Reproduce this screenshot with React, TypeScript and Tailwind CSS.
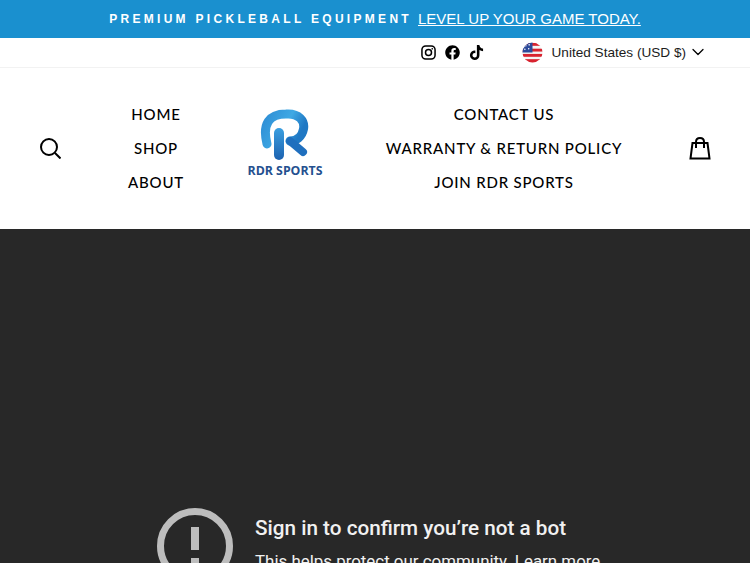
import { FaFacebook, FaTiktok } from "react-icons/fa";
import { ChevronDown } from "lucide-react";

const leftLinks = ["HOME", "SHOP", "ABOUT"];
const rightLinks = ["CONTACT US", "WARRANTY & RETURN POLICY", "JOIN RDR SPORTS"];

function NavColumn({ links, className }: { links: string[]; className: string }) {
  return (
    <ul className={`flex flex-col items-center ${className}`}>
      {links.map((l) => (
        <li key={l} className="flex h-[34px] items-center whitespace-nowrap font-['Lato',sans-serif] text-[15px] font-medium tracking-[0.8px] text-black">
          {l}
        </li>
      ))}
    </ul>
  );
}

function UsFlag() {
  return (
    <svg viewBox="0 0 22 22" className="h-[21px] w-[21px] shrink-0">
      <defs>
        <clipPath id="flag-clip">
          <circle cx="11" cy="11" r="10.5" />
        </clipPath>
      </defs>
      <g clipPath="url(#flag-clip)">
        <rect width="22" height="22" fill="#f4f4f4" />
        <rect y="1" width="22" height="3" fill="#d8232f" />
        <rect y="7" width="22" height="3" fill="#d8232f" />
        <rect y="12.5" width="22" height="3" fill="#d8232f" />
        <rect y="18" width="22" height="4" fill="#d8232f" />
        <rect width="11" height="11" fill="#2c4a9a" />
        <circle cx="4" cy="4" r="0.8" fill="#fff" />
        <circle cx="7.5" cy="3" r="0.8" fill="#fff" />
        <circle cx="3" cy="7.5" r="0.8" fill="#fff" />
        <circle cx="7" cy="7" r="0.8" fill="#fff" />
      </g>
    </svg>
  );
}

function InstagramIcon() {
  return (
    <svg viewBox="0 0 16 16" className="h-[15px] w-[15px]" fill="none" stroke="black">
      <rect x="1" y="1" width="14" height="14" rx="4" strokeWidth="1.6" />
      <circle cx="8" cy="8" r="3.2" strokeWidth="1.6" />
      <circle cx="12" cy="4" r="0.9" fill="black" stroke="none" />
    </svg>
  );
}

function LogoMark() {
  return (
    <svg viewBox="260 106 52 56" className="h-[56px] w-[52px] shrink-0" fill="none" strokeLinecap="round">
      <defs>
        <linearGradient id="arc" x1="0" y1="0" x2="1" y2="0.4">
          <stop offset="0" stopColor="#2f8fd6" />
          <stop offset="0.6" stopColor="#3fa9e4" />
          <stop offset="1" stopColor="#1f78c4" />
        </linearGradient>
        <linearGradient id="stem" gradientUnits="userSpaceOnUse" x1="280" y1="126" x2="280" y2="158">
          <stop offset="0" stopColor="#3a9fe0" />
          <stop offset="1" stopColor="#1c62b0" />
        </linearGradient>
      </defs>
      <path d="M268 142C263 122 270 112 287 112C300 111 306 119 304.5 127C303 135 297 139 291 139" stroke="url(#arc)" strokeWidth="9" />
      <path d="M291 139L304 150" stroke="#1f6fbe" strokeWidth="8" />
      <path d="M280 131L280 153" stroke="url(#stem)" strokeWidth="10" />
    </svg>
  );
}

export default function App() {
  return (
    <div className="flex h-[563px] flex-col overflow-hidden bg-white font-['Liberation_Sans',Arial,sans-serif]">
      <div className="flex h-[38px] shrink-0 items-center justify-center gap-[6px] bg-[#1a90cf] text-white">
        <span className="text-[12px] font-bold tracking-[3.3px]">PREMIUM PICKLEBALL EQUIPMENT</span>
        <a className="text-[15px] underline">LEVEL UP YOUR GAME TODAY.</a>
      </div>

      <div className="flex h-[30px] shrink-0 items-center justify-end border-b border-[#f2f2f2] pr-[42px]">
        <div className="mb-[1px] flex items-center gap-[9px]">
          <InstagramIcon />
          <FaFacebook className="h-[15px] w-[15px] text-black" />
          <FaTiktok className="h-[15px] w-[15px] text-black" />
        </div>
        <div className="ml-[38px] flex items-center">
          <UsFlag />
          <span className="mt-[1px] ml-[9px] text-[13.6px] text-[#1c1c1c]">United States (USD $)</span>
          <ChevronDown className="ml-[2px] h-[20px] w-[20px] text-black" strokeWidth={1.5} />
        </div>
      </div>

      <header className="flex h-[161px] shrink-0 items-center pl-[40px]">
        <svg viewBox="0 0 21 21" className="h-[21px] w-[21px] shrink-0" fill="none" stroke="black" strokeWidth="2">
          <circle cx="9" cy="9" r="8" />
          <path d="M15 15L20.5 20.5" />
        </svg>
        <NavColumn links={leftLinks} className="ml-[5px] w-[180px]" />
        <div className="mb-[12px] flex w-[78px] flex-col items-center">
          <LogoMark />
          <span className="whitespace-nowrap font-['Open_Sans',sans-serif] text-[12.3px] leading-[14px] font-bold text-[#24508f]">RDR SPORTS</span>
        </div>
        <NavColumn links={rightLinks} className="w-[360px]" />
        <svg viewBox="0 0 22 24" className="ml-[5px] h-[24px] w-[22px] shrink-0" fill="none" stroke="black" strokeWidth="2">
          <path d="M3.5 6H18.5L20.5 21.5H1.5Z" />
          <path d="M7 11V5C7 2.6 8.7 1 11 1C13.3 1 15 2.6 15 5V11" />
        </svg>
      </header>

      <main className="flex flex-1 items-start gap-[22px] bg-[#282828] pt-[279px] pl-[157px] font-['Roboto',sans-serif]">
        <svg viewBox="0 0 76 76" className="h-[76px] w-[76px] shrink-0" fill="none">
          <circle cx="38" cy="38" r="34.5" stroke="#bdbdbd" strokeWidth="7" />
          <rect x="34" y="19" width="8" height="23" fill="#bdbdbd" />
          <rect x="34" y="50" width="8" height="8" fill="#bdbdbd" />
        </svg>
        <div className="pt-[6px]">
          <h1 className="text-[20.7px] leading-[28px] font-medium whitespace-nowrap text-[#f1f1f1]">Sign in to confirm you’re not a bot</h1>
          <p className="mt-[8px] text-[16.9px] leading-[22px] whitespace-nowrap text-[#f1f1f1]">This helps protect our community. Learn more</p>
        </div>
      </main>
    </div>
  );
}
